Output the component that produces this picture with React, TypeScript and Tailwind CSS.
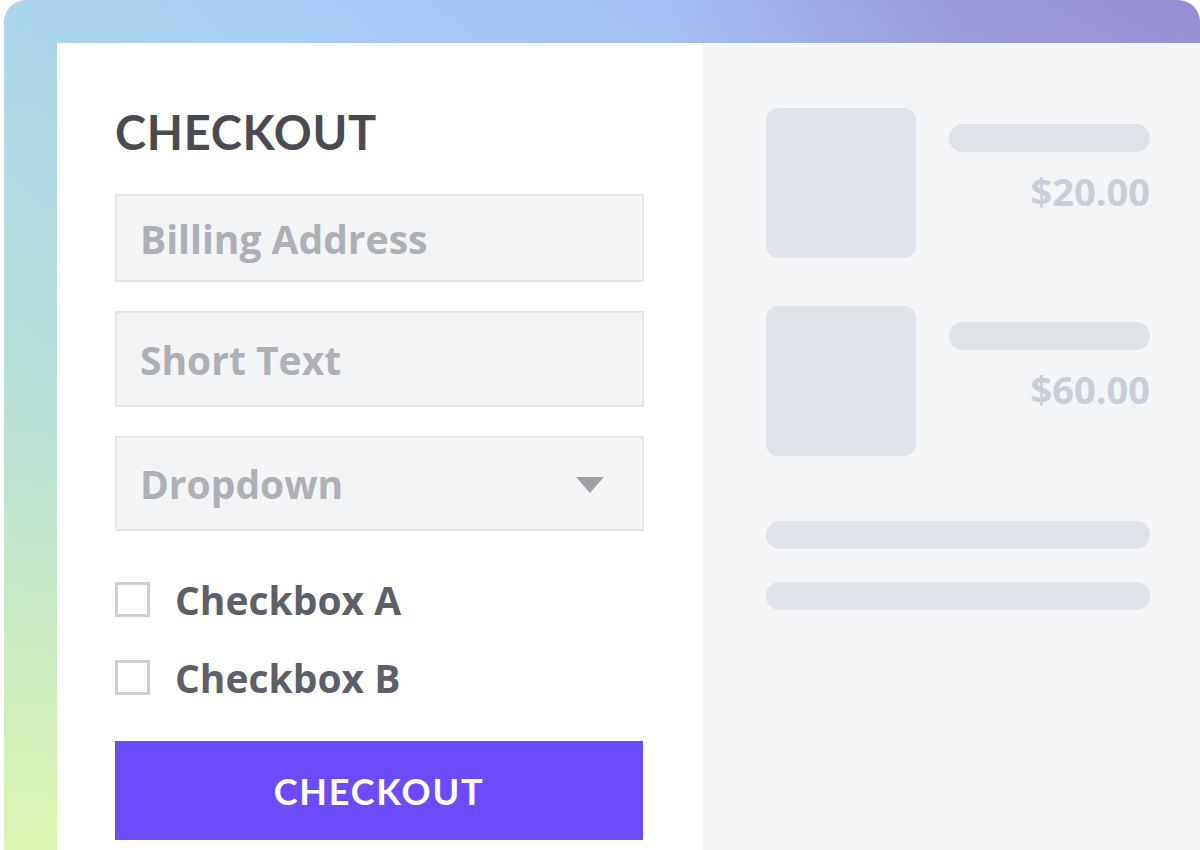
import { ReactNode } from 'react';

const sans = "font-['Open_Sans',sans-serif]";
const geo = "font-['Lato',sans-serif]";

function Field({ h, children }: { h: string; children: ReactNode }) {
  return (
    <div
      className={`flex w-[529px] items-center justify-between border-2 border-[#e4e5e7] bg-[#f3f4f6] pl-[23px] pr-[38px] ${h}`}
    >
      {children}
    </div>
  );
}

function Placeholder({ text }: { text: string }) {
  return (
    <span className={`${sans} text-[39px] font-bold leading-none text-[#adb0b4]`}>{text}</span>
  );
}

function Checkbox({ label }: { label: string }) {
  return (
    <div className="flex h-[36px] items-center gap-[25px]">
      <div className="h-[35px] w-[35px] border-[3px] border-[#cfcfd1] bg-white" />
      <span className={`${sans} text-[39px] font-bold leading-none text-[#5e6067]`}>{label}</span>
    </div>
  );
}

function CartItem({ price }: { price: string }) {
  return (
    <div className="flex gap-[33px]">
      <div className="h-[150px] w-[150px] rounded-[12px] bg-[#dfe3ea]" />
      <div className="flex flex-1 flex-col items-end pt-[16px]">
        <div className="h-[28px] w-full rounded-full bg-[#dfe2e8]" />
        <span className={`${sans} mt-[20px] text-[38px] font-bold leading-none text-[#c8ced8]`}>
          {price}
        </span>
      </div>
    </div>
  );
}

export default function App() {
  return (
    <div className="h-[850px] w-[1200px] overflow-hidden bg-white">
      <div className="ml-[4px] h-full w-[1196px] rounded-t-[22px] bg-[linear-gradient(to_bottom,rgba(220,245,176,0)_0%,rgba(205,238,190,0.45)_50%,#dcf5b0_100%),linear-gradient(to_right,#acd6e9_0%,#a8cbf8_25%,#a4bdf4_55%,#9a99dd_80%,#968ed4_100%)] pl-[53px] pt-[43px]">
        <div className="flex h-full">
          {/* form column */}
          <div className="flex w-[646px] flex-col bg-white pl-[58px] pt-[66px]">
            <h1
              className={`${geo} text-[47px] font-bold leading-none tracking-[0.015em] text-[#4a4b50]`}
            >
              CHECKOUT
            </h1>
            <div className="mt-[38px] flex flex-col gap-[29px]">
              <Field h="h-[88px]">
                <Placeholder text="Billing Address" />
              </Field>
              <Field h="h-[96px]">
                <Placeholder text="Short Text" />
              </Field>
              <Field h="h-[95px]">
                <Placeholder text="Dropdown" />
                <svg width="28" height="16" viewBox="0 0 28 16" className="mt-[2px]">
                  <path d="M0 0 H28 L14 16 Z" fill="#9ea0a4" />
                </svg>
              </Field>
            </div>
            <div className="mt-[50px] flex flex-col gap-[42px]">
              <Checkbox label="Checkbox A" />
              <Checkbox label="Checkbox B" />
            </div>
            <button
              className={`${geo} mt-[46px] flex h-[99px] w-[528px] items-center justify-center bg-[#6c4bfd] text-[36px] font-bold leading-none tracking-[0.05em] text-white`}
            >
              CHECKOUT
            </button>
          </div>

          {/* summary column */}
          <div className="flex w-[497px] flex-col bg-[#f4f5f7] pl-[63px] pr-[50px] pt-[65px]">
            <div className="flex flex-col gap-[48px]">
              <CartItem price="$20.00" />
              <CartItem price="$60.00" />
            </div>
            <div className="mt-[65px] flex flex-col gap-[33px]">
              <div className="h-[28px] w-full rounded-full bg-[#dfe2e8]" />
              <div className="h-[28px] w-full rounded-full bg-[#dfe2e8]" />
            </div>
          </div>
        </div>
      </div>
    </div>
  );
}
